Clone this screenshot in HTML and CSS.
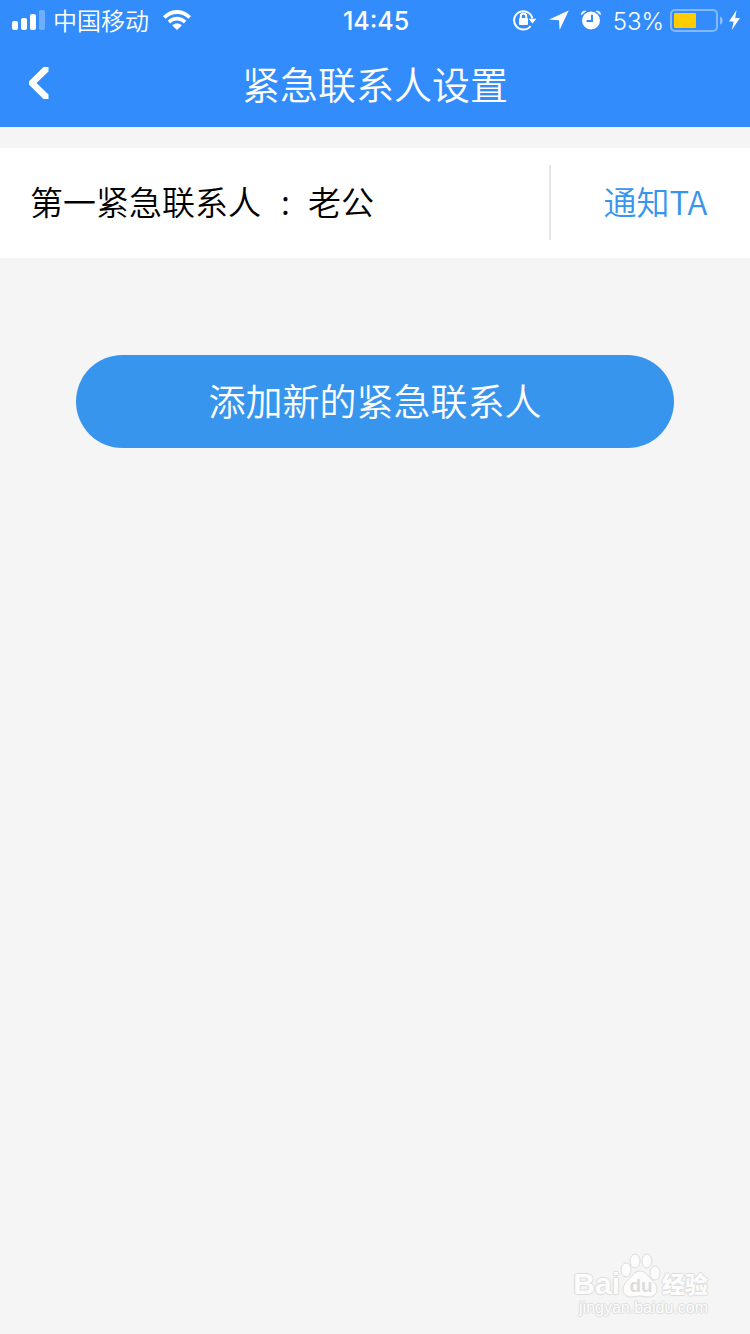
FILE: index.html
```html
<!DOCTYPE html>
<html lang="zh-CN">
<head>
<meta charset="utf-8">
<meta name="viewport" content="width=device-width, initial-scale=1">
<title>紧急联系人设置</title>
<link rel="stylesheet" href="styles.css">
</head>
<body>
<div class="screen">
  <header class="top">
    <div class="status">
      <div class="status-left">
        <svg class="icon" width="33" height="20" viewBox="0 0 33 20" aria-hidden="true">
          <rect x="0" y="11" width="6" height="9" rx="2"/>
          <rect x="9" y="8" width="6" height="12" rx="2"/>
          <rect x="18" y="4" width="6" height="16" rx="2"/>
          <rect x="27" y="0" width="6" height="20" rx="2" opacity=".3"/>
        </svg>
        <span class="carrier">中国移动</span>
        <svg class="icon" width="28" height="20" viewBox="0 0 28 20" aria-hidden="true">
          <path d="M0 6.200C7.600-2.100 20.400-2.100 28 6.200L25.400 8.800C19.300 2.300 8.700 2.300 2.600 8.800Z"/>
          <path d="M4.700 10.800C9.900 5.400 18.100 5.400 23.300 10.800L20.700 13.400C17 9.600 11 9.600 7.300 13.400Z"/>
          <path d="M9.200 15.400C11.900 12.800 16.100 12.800 18.800 15.400L14 20Z"/>
        </svg>
      </div>
      <time class="clock">14:45</time>
      <div class="status-right">
        <svg class="icon" width="24" height="22" viewBox="0 0 24 22" aria-hidden="true">
          <path class="line" d="M17.600 17A9.200 9.200 0 1 1 19.300 9.500"/>
          <path d="M15.600 9.800H23.400L19.500 14.400Z"/>
          <rect x="6" y="9" width="9" height="7" rx="1"/>
          <path class="thin" d="M7.800 9.500V7.300a2.700 2.700 0 0 1 5.400 0V9.500"/>
        </svg>
        <svg class="icon" width="20" height="20" viewBox="0 0 20 20" aria-hidden="true">
          <path d="M19.700 .4L0 9.600L10 10.200L10.600 20Z"/>
        </svg>
        <svg class="icon" width="20" height="20" viewBox="0 0 20 20" aria-hidden="true">
          <circle cx="10" cy="10.500" r="9"/>
          <path d="M.3 5.200C-.5 2 2.500-.2 5.400 1.100ZM19.700 5.200C20.500 2 17.500-.2 14.600 1.100Z"/>
          <path class="cut" d="M11 4.800V11H5.600"/>
        </svg>
        <span class="percent">53%</span>
        <svg class="icon battery" width="53" height="23" viewBox="0 0 53 23" aria-hidden="true">
          <rect class="case" x="1" y="1" width="46" height="21" rx="4"/>
          <path d="M50 7.500C53.500 8.500 53.500 14.500 50 15.500Z" opacity=".45"/>
          <rect class="charge" x="4" y="4" width="22" height="15" rx="1"/>
        </svg>
        <svg class="icon" width="11" height="20" viewBox="0 0 11 20" aria-hidden="true">
          <path d="M7.600 0L0 11.400H4.600L2.800 20L11 8H6.200Z"/>
        </svg>
      </div>
    </div>
    <nav class="bar">
      <button class="back" type="button" aria-label="返回">
        <svg width="20" height="32" viewBox="0 0 20 32" aria-hidden="true">
          <path d="M14.500 0H19.500V4.500L7.500 16L19.500 27.500V32H14.500L.8 18.600C-.7 17-.7 15 .8 13.400Z"/>
        </svg>
      </button>
      <h1 class="title">紧急联系人设置</h1>
    </nav>
  </header>
  <main class="content">
    <section class="contact">
      <p class="contact-name">第一紧急联系人<span class="colon">:</span>老公</p>
      <button class="notify" type="button">通知TA</button>
    </section>
    <button class="add" type="button">添加新的紧急联系人</button>
  </main>
  <footer class="mark">
    <div class="brand">
      <span class="brand-latin">Bai</span>
      <span class="paw">
        <svg width="42" height="45" viewBox="0 0 42 45" aria-hidden="true">
          <ellipse cx="6" cy="17" rx="5" ry="7"/>
          <ellipse cx="15" cy="8" rx="5" ry="7"/>
          <ellipse cx="27" cy="8" rx="5" ry="7"/>
          <ellipse cx="35" cy="20" rx="5" ry="7"/>
          <path d="M20 18C26 18 28 24 33 28C40 35 37 44 29 44C25 44 23 43 20 43C17 43 15 44 11 44C3 44 0 35 7 28C12 24 14 18 20 18Z"/>
        </svg>
        <span class="paw-text">du</span>
      </span>
      <span class="brand-han">经验</span>
    </div>
    <div class="site">jingyan.baidu.com</div>
  </footer>
</div>
</body>
</html>
```
FILE: styles.css
```css
* {
  box-sizing: border-box;
}

body {
  margin: 0;
  background: #f5f5f5;
  font-family: "Noto Sans CJK SC DemiLight", "Noto Sans CJK SC", sans-serif;
  font-weight: 350;
}

button {
  border: 0;
  padding: 0;
  background: none;
  font: inherit;
  cursor: pointer;
}

.screen {
  display: flex;
  flex-direction: column;
  min-height: 100vh;
}

.top {
  background: #328cfc;
  color: #fff;
}

.status {
  display: grid;
  grid-template-columns: 1fr auto 1fr;
  align-items: center;
  height: 40px;
  padding: 0 10px 0 12px;
  font-size: 24px;
}

.status-left,
.status-right {
  display: flex;
  align-items: center;
}

.status-left {
  gap: 8px;
}

.status-right {
  justify-content: flex-end;
  gap: 12px;
}

.icon {
  flex: none;
  fill: #fff;
}

.carrier {
  margin-right: 6px;
  line-height: 40px;
}

.clock,
.percent {
  padding-top: 2px;
  font-family: Inter, sans-serif;
}

.clock {
  font-size: 25px;
  font-weight: 500;
}

.battery {
  margin: 0 -6px;
}

.line,
.thin {
  fill: none;
  stroke: #fff;
  stroke-width: 2;
}

.cut {
  fill: none;
  stroke: #328cfc;
  stroke-width: 2;
}

.case {
  fill: none;
  stroke: #fff;
  stroke-opacity: .4;
  stroke-width: 2;
}

.charge {
  fill: #fc0;
}

.bar {
  display: grid;
  grid-template-columns: 76px 1fr 76px;
  align-items: center;
  height: 87px;
}

.back {
  display: flex;
  align-items: center;
  height: 87px;
  padding: 0 0 2px 29px;
  fill: #fff;
}

.title {
  margin: 0;
  padding-bottom: 2px;
  font-size: 38px;
  font-weight: 350;
  line-height: 85px;
  text-align: center;
}

.content {
  display: flex;
  flex-direction: column;
  padding-top: 21px;
}

.contact {
  display: flex;
  align-items: center;
  height: 110px;
  padding-bottom: 2px;
  background: #fff;
}

.contact-name {
  flex: 1;
  margin: 0;
  padding: 0 0 2px 30px;
  color: #000;
  font-size: 33px;
  line-height: 72px;
}

.colon {
  padding: 0 18px 0 20px;
}

.notify {
  width: 201px;
  height: 75px;
  padding: 0 0 2px 10px;
  border-left: 2px solid #e6e6e6;
  color: #3895ee;
  font-size: 33px;
}

.add {
  height: 93px;
  margin: 97px 76px 0;
  padding-bottom: 4px;
  border-radius: 47px;
  background: #3895ee;
  color: #fff;
  font-size: 37px;
}

.mark {
  align-self: flex-end;
  margin-top: auto;
  padding: 0 42px 16px 0;
  color: #fcfcfc;
  text-shadow: 1px 0 1px #dcdcdc, -1px 0 1px #dcdcdc, 0 1px 1px #dcdcdc, 0 -1px 1px #dcdcdc;
}

.brand {
  display: flex;
  align-items: flex-end;
  justify-content: flex-end;
  height: 45px;
}

.brand-latin {
  font: 700 30px/28px "Liberation Sans", sans-serif;
}

.paw {
  display: grid;
  place-items: end center;
}

.paw svg,
.paw-text {
  grid-area: 1 / 1;
}

.paw svg {
  fill: #fcfcfc;
  stroke: #dcdcdc;
}

.paw-text {
  color: #dcdcdc;
  font: 700 19px/24px "Liberation Sans", sans-serif;
  text-shadow: none;
}

.brand-han {
  font-family: "Noto Sans CJK SC", sans-serif;
  font-size: 23px;
  font-weight: 900;
  line-height: 30px;
}

.site {
  font: 400 16px/20px "Liberation Sans", sans-serif;
  text-align: right;
}
```
